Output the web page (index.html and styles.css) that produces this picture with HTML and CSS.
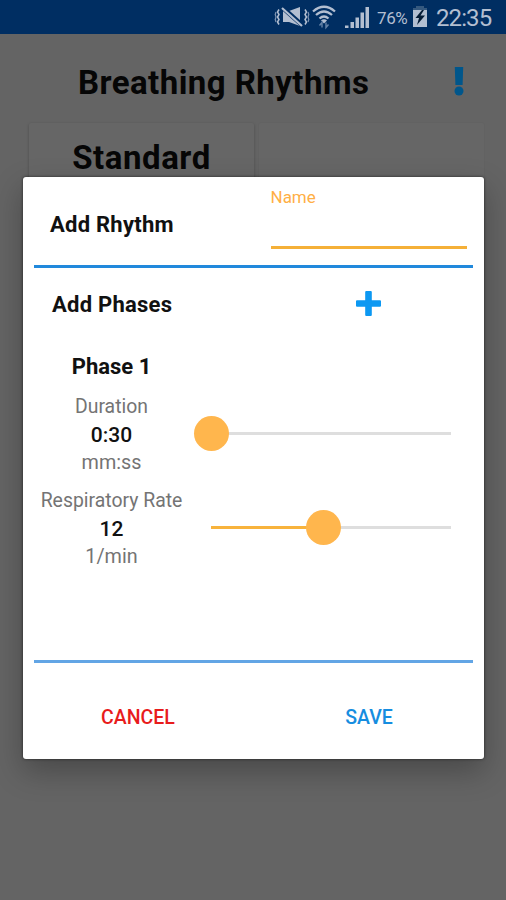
FILE: index.html
```html
<!DOCTYPE html>
<html lang="en">
<head>
<meta charset="utf-8">
<title>Breathing Rhythms</title>
<link rel="stylesheet" href="styles.css">
</head>
<body>
<div class="screen">
  <div class="statusbar">
    <svg class="status-icons" width="106" height="34" viewBox="0 0 106 34" aria-hidden="true">
      <path fill="none" stroke="#b3bfd1" stroke-width="1.500" d="M6 9.500l-1.500 2.500L6 14.500 4.500 17 6 19.500 4.500 22 6 24.500M32 9.500l1.500 2.500-1.500 2.500 1.500 2.500-1.500 2.500 1.500 2.500-1.500 2.500"/>
      <path fill="none" stroke="#7f95b3" stroke-width="1.200" d="M3 12l-.8 2.500.8 2.500-.8 2.500.8 2.500M35 12l.8 2.500-.8 2.500.8 2.500-.8 2.500"/>
      <path fill="#b3bfd1" d="M10 11h6l11-4v19l-11-4h-6z"/>
      <path stroke="#002e62" stroke-width="4.500" d="M10 8l19 17"/>
      <path stroke="#b3bfd1" stroke-width="2.200" d="M9 8l20 18"/>
      <g transform="translate(1 -.5)">
        <g fill="none" stroke="#b3bfd1" stroke-width="2.300">
          <path d="M39 12q11-9.500 22 0M42 15.500q8-7 16 0M45.500 19q4.500-4 9 0"/>
        </g>
        <path fill="#b3bfd1" d="M47 21q3-2.500 6 0l-3 3z"/>
        <path fill="none" stroke="#6684a8" stroke-width="1.400" d="M48 28v-5l-2.500 3M52 23v5l2.500-3"/>
      </g>
      <path fill="#b3bfd1" d="M72 25.500h3.500V28H72zM77.500 22H81v6h-3.500zM82.500 17.500H86V28h-3.500zM87.500 12.500H91V28h-3.500zM92.500 7H96v21h-3.500z"/>
    </svg>
    <span class="percent">76%</span>
    <svg class="battery" width="16" height="22" viewBox="0 0 16 22" aria-hidden="true">
      <path fill="#35597f" d="M4 0h8v2h3v4H1V2h3z"/>
      <path fill="#b3bfd1" d="M1 4h14v17H1z"/>
      <path fill="#051c35" d="M10 4L3.500 12H7l-2 7 8-9.500H8.500L12 4z"/>
    </svg>
    <span class="clock">22:35</span>
  </div>
  <header class="header">
    <h1 class="title">Breathing Rhythms</h1>
    <svg class="alert" width="10" height="29" viewBox="0 0 10 29" aria-hidden="true">
      <path d="M.8 0h8.400L8.600 18H1.400z"/><circle cx="5" cy="24" r="4.500"/>
    </svg>
  </header>
  <main class="cards">
    <section class="card">Standard</section>
    <section class="card card-empty"></section>
  </main>

  <div class="dialog">
    <div class="name-row">
      <h2 class="heading">Add Rhythm</h2>
      <label class="field"><span>Name</span></label>
    </div>
    <div class="add-row">
      <h2 class="heading">Add Phases</h2>
      <svg class="plus" width="25" height="25" viewBox="0 0 25 25" aria-hidden="true">
        <path d="M10.200 0h4.600q1 0 1 1v8.200H24q1 0 1 1v4.600q0 1-1 1h-8.200V24q0 1-1 1h-4.600q-1 0-1-1v-8.200H1q-1 0-1-1v-4.600q0-1 1-1h8.200V1q0-1 1-1z"/>
      </svg>
    </div>
    <div class="phase">
      <h3 class="phase-title">Phase 1</h3>
      <div class="setting">
        <div class="labels"><span>Duration</span><strong>0:30</strong><span class="unit">mm:ss</span></div>
        <div class="slider"><div class="fill" style="width:0%"></div><div class="thumb"></div><div class="rest"></div></div>
      </div>
      <div class="setting">
        <div class="labels"><span>Respiratory Rate</span><strong>12</strong><span class="unit">1/min</span></div>
        <div class="slider"><div class="fill" style="width:46.7%"></div><div class="thumb"></div><div class="rest"></div></div>
      </div>
    </div>
    <div class="actions">
      <button class="cancel">CANCEL</button>
      <button class="save">SAVE</button>
    </div>
  </div>
</div>
</body>
</html>
```
FILE: styles.css
```css
* { box-sizing: border-box; }
body { margin: 0; font-family: Roboto, "Liberation Sans", sans-serif; }
h1, h2, h3 { margin: 0; }
.screen {
  position: relative;
  width: 506px;
  height: 900px;
  overflow: hidden;
  background: #646464;
}
.statusbar {
  display: flex;
  align-items: center;
  height: 34px;
  padding-left: 273px;
  background: #002e62;
  color: #b3bfd1;
}
.percent { width: 34px; margin-left: -2px; font-size: 17px; line-height: 34px; padding-top: 2px; letter-spacing: -0.4px; }
.battery { margin-left: 1px; }
.clock { margin-left: 8px; font-size: 24px; line-height: 34px; padding-top: 2px; letter-spacing: -0.9px; }
.header {
  display: flex;
  align-items: center;
  height: 89px;
  padding: 8px 0 0 78px;
}
.title { width: 376px; font-size: 33px; font-weight: 700; line-height: 40px; letter-spacing: 0.45px; white-space: nowrap; color: #060606; }
.alert { fill: #00568b; margin-top: -2px; }
.cards { display: flex; gap: 5px; padding-left: 29px; }
.card {
  width: 225px;
  height: 620px;
  padding-top: 15px;
  border-radius: 2px;
  background: #666;
  box-shadow: 0 1px 3px rgba(0, 0, 0, .25);
  font-size: 33px;
  font-weight: 700;
  line-height: 40px;
  letter-spacing: 0.55px;
  text-align: center;
  color: #060606;
}
.card-empty { box-shadow: 0 0 2px rgba(0, 0, 0, .06); }
.dialog {
  position: absolute;
  left: 23px;
  top: 176.5px;
  width: 461px;
  height: 582px;
  padding: 0 11px;
  border-radius: 3px;
  background: #fff;
  box-shadow: 0 0 3px rgba(0, 0, 0, .6), 0 12px 30px rgba(0, 0, 0, .28);
}
.name-row {
  display: flex;
  height: 91.5px;
  padding: 0 6px 0 16px;
  border-bottom: 3px solid #2189dc;
}
.heading { font-size: 22px; font-weight: 700; line-height: 30px; letter-spacing: 0.25px; color: #111; white-space: nowrap; }
.name-row .heading { padding-top: 33px; width: 220.5px; }
.field {
  width: 196px;
  height: 72px;
  padding-top: 9px;
  border-bottom: 3px solid #f5b038;
  font-size: 17px;
  line-height: 22px;
  color: #ffaf45;
}
.add-row { display: flex; align-items: center; height: 72px; padding-left: 18px; }
.add-row .heading { width: 304px; padding-top: 1px; }
.plus { fill: #0c98f2; margin-top: -2px; }
.phase { height: 319.5px; }
.phase-title { width: 155px; padding-top: 12px; font-size: 22px; line-height: 30px; text-align: center; color: #111; }
.setting { display: flex; align-items: center; height: 94px; }
.phase-title + .setting { margin-top: 4px; }
.labels {
  display: flex;
  flex-direction: column;
  width: 155px;
  padding-top: 3px;
  font-size: 19.4px;
  line-height: 28px;
  text-align: center;
  color: #747474;
  white-space: nowrap;
}
.labels strong { font-size: 21px; font-weight: 500; color: #111; }
.labels .unit { font-size: 19.8px; }
.slider { display: flex; align-items: center; width: 240px; margin-left: 22px; }
.fill { height: 3px; background: #f8b33c; }
.thumb { flex: none; width: 35px; height: 35px; margin: 0 -17.5px; border-radius: 50%; background: #ffb64d; z-index: 1; }
.rest { flex: 1; height: 3px; background: #dedede; }
.actions { display: flex; height: 99px; border-top: 3px solid #62a5e5; }
.actions button {
  height: 96px;
  padding: 15px 0 0;
  border: 0;
  background: none;
  font: 500 19.5px/24px Roboto, sans-serif;
}
.actions .cancel { flex: 0 0 208px; color: #e81c1c; }
.actions .save { flex: 0 0 254px; color: #168de0; }
```
